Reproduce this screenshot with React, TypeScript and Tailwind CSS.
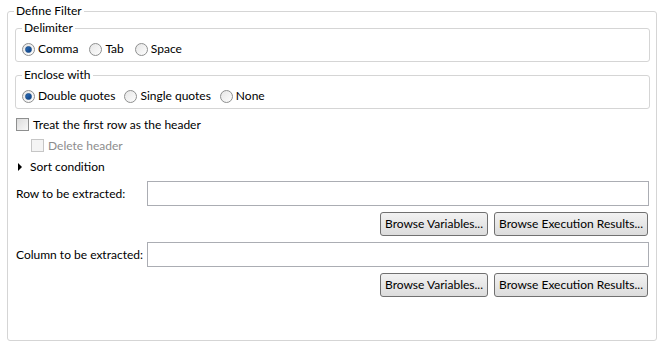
import React, { useState } from 'react';

const font = { fontFamily: 'Lato, "Noto Sans", sans-serif' };

function Radio({ label, checked, onClick }: { label: string; checked: boolean; onClick: () => void }) {
  return (
    <label className="flex items-center gap-[3px] cursor-default" onClick={onClick}>
      <span className="w-[13px] h-[13px] rounded-full border border-[#8e8f8f] bg-gradient-to-br from-[#e6e6e6] to-[#fdfdfd] flex items-center justify-center">
        {checked && <span className="w-[7px] h-[7px] rounded-full bg-gradient-to-br from-[#2d6fb8] to-[#0c3f84] border border-[#1b4f8c]" />}
      </span>
      <span>{label}</span>
    </label>
  );
}

function Checkbox({ label, checked, disabled, onClick }: { label: string; checked: boolean; disabled?: boolean; onClick?: () => void }) {
  return (
    <label className={disabled ? 'flex items-center gap-[4px] text-[#8d8d8d]' : 'flex items-center gap-[4px]'} onClick={disabled ? undefined : onClick}>
      <span className={disabled ? 'w-[13px] h-[13px] border border-[#c6c6c6] bg-[#f4f4f4] flex items-center justify-center' : 'w-[13px] h-[13px] border border-[#8e8f8f] bg-gradient-to-br from-[#dcdcdc] to-[#f8f8f8] flex items-center justify-center'}>
        {checked && <span className="text-[10px] leading-none">✓</span>}
      </span>
      <span>{label}</span>
    </label>
  );
}

function Btn({ children }: { children: React.ReactNode }) {
  return (
    <button className="h-[24px] px-[4px] rounded-[3px] border border-[#707070] bg-gradient-to-b from-[#f2f2f2] to-[#dcdcdc] text-black leading-none whitespace-nowrap">
      {children}
    </button>
  );
}

export default function App() {
  const [delim, setDelim] = useState('Comma');
  const [enclose, setEnclose] = useState('Double quotes');
  const [header, setHeader] = useState(false);

  return (
    <div className="w-[663px] h-[352px] bg-white text-[12px] text-black pt-[4px] pl-[7px]" style={font}>
      <fieldset className="w-[650px] h-[337px] border border-[#d5d5d5] rounded-[3px] pl-[7px] pr-[6px]">
        <legend className="-ml-[1px] px-[2px] leading-[14px]">Define Filter</legend>

        <fieldset className="mt-[3px] h-[41px] border border-[#d5d5d5] rounded-[3px] pl-[6px]">
          <legend className="px-[2px] leading-[14px]">Delimiter</legend>
          <div className="flex items-center gap-[11px] h-[24px] mt-[2px]">
            {['Comma', 'Tab', 'Space'].map((d) => (
              <Radio key={d} label={d} checked={delim === d} onClick={() => setDelim(d)} />
            ))}
          </div>
        </fieldset>

        <fieldset className="mt-[6px] h-[41px] border border-[#d5d5d5] rounded-[3px] pl-[6px]">
          <legend className="px-[2px] leading-[14px]">Enclose with</legend>
          <div className="flex items-center gap-[9px] h-[24px] mt-[2px]">
            {['Double quotes', 'Single quotes', 'None'].map((d) => (
              <Radio key={d} label={d} checked={enclose === d} onClick={() => setEnclose(d)} />
            ))}
          </div>
        </fieldset>

        <div className="ml-[1px] mt-[8px] h-[15px] flex items-center">
          <Checkbox label="Treat the first row as the header" checked={header} onClick={() => setHeader(!header)} />
        </div>
        <div className="ml-[16px] mt-[6px] h-[15px] flex items-center">
          <Checkbox label="Delete header" checked={false} disabled />
        </div>
        <div className="ml-[3px] mt-[6px] h-[15px] flex items-center gap-[8px]">
          <svg width="4" height="8" viewBox="0 0 4 8"><path d="M0 0 L4 4 L0 8 Z" fill="#000" /></svg>
          <span>Sort condition</span>
        </div>

        <div className="mt-[7px] flex items-center">
          <span className="w-[132px] pl-[1px] whitespace-nowrap">Row to be extracted:</span>
          <input className="w-[502px] h-[25px] border border-[#abadb3] outline-none px-[3px]" />
        </div>
        <div className="mt-[6px] flex justify-end gap-[6px] pr-[2px]">
          <Btn>Browse Variables...</Btn>
          <Btn>Browse Execution Results...</Btn>
        </div>

        <div className="mt-[6px] flex items-center">
          <span className="w-[132px] pl-[1px] whitespace-nowrap">Column to be extracted:</span>
          <input className="w-[502px] h-[25px] border border-[#abadb3] outline-none px-[3px]" />
        </div>
        <div className="mt-[6px] flex justify-end gap-[6px] pr-[2px]">
          <Btn>Browse Variables...</Btn>
          <Btn>Browse Execution Results...</Btn>
        </div>
      </fieldset>
    </div>
  );
}
